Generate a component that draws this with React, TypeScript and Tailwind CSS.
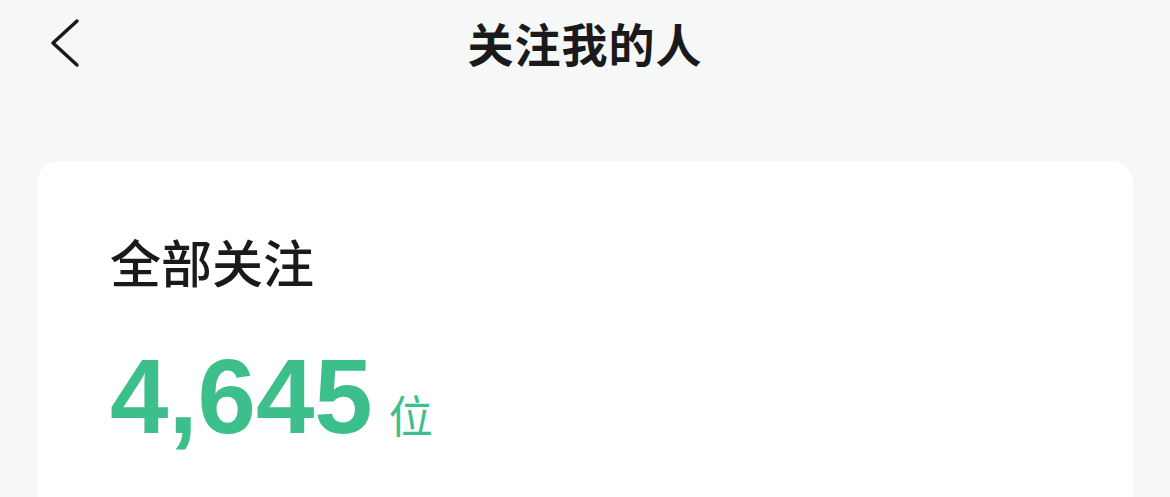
export default function App() {
    return (
        <div
            className="h-[497px] w-full bg-[#f6f7f7] overflow-hidden"
            style={{ fontFamily: '"Noto Sans CJK SC", "Noto Sans", sans-serif' }}
        >
            {/* top bar */}
            <div className="relative flex h-[84px] items-center justify-center">
                <button className="absolute left-[37px] top-[5px] p-2 text-[#1a1a1a]">
                    <svg width="40" height="60" viewBox="0 0 40 60" fill="none">
                        <path d="M32 8 L8 30 L32 52" stroke="currentColor" strokeWidth="3.5" strokeLinecap="round" strokeLinejoin="round" />
                    </svg>
                </button>
                <h1 className="text-[46px] font-bold leading-none tracking-[1px] text-[#1a1a1a]">关注我的人</h1>
            </div>

            {/* follower count card */}
            <div className="mx-[37px] mt-[77px] h-[400px] rounded-[22px] bg-white pl-[73px] pt-[75px]">
                <h2 className="text-[51px] font-medium leading-none text-[#1a1a1a]">全部关注</h2>
                <div className="mt-[57px] flex items-baseline gap-[16px] text-[#3cbf8b]">
                    <span
                        className="text-[105px] font-bold leading-none"
                        style={{ fontFamily: '"Liberation Sans", Arial, sans-serif' }}
                    >
                        4,645
                    </span>
                    <span className="text-[44px] leading-none">位</span>
                </div>
            </div>
        </div>
    );
}
